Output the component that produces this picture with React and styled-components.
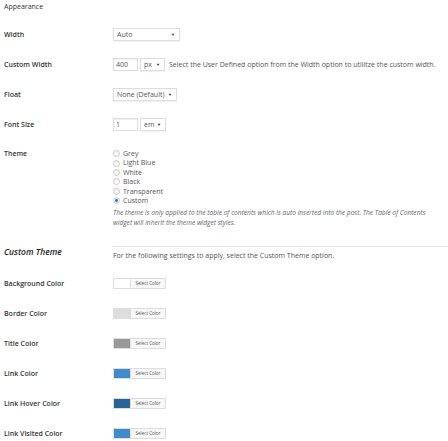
import styled, { createGlobalStyle } from "styled-components";

const Global = createGlobalStyle`
  body {
    margin: 0;
    background: #fff;
    font-family: "Open Sans", "Noto Sans", sans-serif;
    color: #333;
  }
`;

const themes = ["Grey", "Light Blue", "White", "Black", "Transparent", "Custom"];

const colorRows = [
  { label: "Background Color", color: "#ffffff" },
  { label: "Border Color", color: "#dddddd" },
  { label: "Title Color", color: "#999999" },
  { label: "Link Color", color: "#428bca" },
  { label: "Link Hover Color", color: "#2a6496" },
  { label: "Link Visited Color", color: "#428bca" },
];

function Select({ value, width }) {
  return (
    <SelectBox width={width}>
      <span>{value}</span>
      <Arrow>▼</Arrow>
    </SelectBox>
  );
}

function App() {
  return (
    <>
      <Global />
      <Page>
        <Heading>Appearance</Heading>
        <Row>
          <Label>Width</Label>
          <Field>
            <Select value="Auto" width={67} />
          </Field>
        </Row>
        <Row>
          <Label>Custom Width</Label>
          <Field>
            <Input>400</Input>
            <Select value="px" width={25} />
            <Note>
              Select the User Defined option from the Width option to utilitze
              the custom width.
            </Note>
          </Field>
        </Row>
        <Row>
          <Label>Float</Label>
          <Field>
            <Select value="None (Default)" width={64} />
          </Field>
        </Row>
        <Row>
          <Label>Font Size</Label>
          <Field>
            <Input>1</Input>
            <Select value="em" width={26} />
          </Field>
        </Row>
        <TallRow>
          <Label>Theme</Label>
          <div>
            <RadioList>
              {themes.map((t) => (
                <RadioItem key={t}>
                  <Radio checked={t === "Custom"} />
                  {t}
                </RadioItem>
              ))}
            </RadioList>
            <Description>
              The theme is only applied to the table of contents which is auto
              inserted into the post. The Table of Contents widget will inherit
              the theme widget styles.
            </Description>
          </div>
        </TallRow>
        <Divider />
        <SectionRow>
          <SectionTitle>Custom Theme</SectionTitle>
          <SectionNote>
            For the following settings to apply, select the Custom Theme option.
          </SectionNote>
        </SectionRow>
        {colorRows.map((r) => (
          <Row key={r.label}>
            <Label>{r.label}</Label>
            <Field>
              <ColorButton>
                <Swatch color={r.color} />
                <ColorText>Select Color</ColorText>
              </ColorButton>
            </Field>
          </Row>
        ))}
      </Page>
    </>
  );
}

const Page = styled.div`
  width: 448px;
  height: 441px;
  overflow: hidden;
  padding-left: 4px;
  box-sizing: border-box;
`;

const Heading = styled.div`
  font-size: 7px;
  line-height: 9px;
  padding-top: 2px;
  height: 17px;
  color: #333;
`;

const Row = styled.div`
  display: flex;
  align-items: center;
  height: 30px;
`;

const Label = styled.div`
  width: 109px;
  flex-shrink: 0;
  font-size: 7px;
  line-height: 9px;
  font-weight: 600;
  color: #333;
`;

const Field = styled.div`
  display: flex;
  align-items: center;
  gap: 2px;
`;

const SelectBox = styled.div`
  width: ${({ width }) => width}px;
  height: 13px;
  box-sizing: border-box;
  border: 1px solid #ddd;
  box-shadow: 0 1px 1px rgba(0, 0, 0, 0.05);
  background: #fff;
  display: flex;
  align-items: center;
  justify-content: space-between;
  padding: 0 4px 0 3px;
  font-size: 7px;
  color: #555;
`;

const Arrow = styled.span`
  font-size: 4px;
  color: #222;
`;

const Input = styled.div`
  width: 25px;
  height: 13px;
  box-sizing: border-box;
  border: 1px solid #ddd;
  box-shadow: inset 0 1px 1px rgba(0, 0, 0, 0.06);
  padding-left: 2px;
  font-size: 7px;
  line-height: 11px;
  color: #555;
`;

const Note = styled.span`
  font-size: 7px;
  color: #555;
  margin-left: 2px;
  white-space: nowrap;
`;

const TallRow = styled.div`
  display: flex;
  align-items: flex-start;
  padding-top: 10px;
  height: 97px;
`;

const RadioList = styled.div`
  display: flex;
  flex-direction: column;
  margin-top: 0;
`;

const RadioItem = styled.div`
  display: flex;
  align-items: center;
  gap: 3px;
  font-size: 7px;
  line-height: 9.4px;
  color: #555;
`;

const Radio = styled.span`
  width: 7px;
  height: 7px;
  box-sizing: border-box;
  border-radius: 50%;
  border: 1px solid #c8c8c8;
  box-shadow: inset 0 1px 1px rgba(0, 0, 0, 0.08);
  background: ${({ checked }) =>
    checked ? "radial-gradient(circle, #1e8cbe 0 1.3px, #fff 1.6px)" : "#fff"};
`;

const Description = styled.div`
  font-size: 6.6px;
  line-height: 10px;
  font-style: italic;
  color: #666;
  margin-top: 3px;
  width: 332px;
`;

const Divider = styled.div`
  margin-left: 109px;
  border-top: 1px solid #e5e5e5;
`;

const SectionRow = styled.div`
  display: flex;
  align-items: flex-start;
  height: 21px;
`;

const SectionTitle = styled.div`
  width: 109px;
  flex-shrink: 0;
  font-size: 8.5px;
  line-height: 10px;
  font-weight: 600;
  font-style: italic;
  color: #222;
`;

const SectionNote = styled.div`
  font-size: 7px;
  line-height: 9px;
  margin-top: 4px;
  color: #555;
`;

const ColorButton = styled.div`
  display: flex;
  align-items: stretch;
  width: 53px;
  height: 11px;
  box-sizing: border-box;
  border: 1px solid #ddd;
  background: #f7f7f7;
`;

const Swatch = styled.span`
  width: 16px;
  background: ${({ color }) => color};
  border-right: 1px solid #ddd;
`;

const ColorText = styled.span`
  flex: 1;
  font-size: 4.5px;
  line-height: 9px;
  text-align: center;
  color: #555;
`;

export default App;
